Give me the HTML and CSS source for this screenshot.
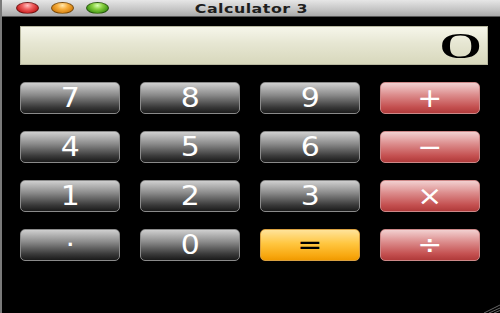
FILE: index.html
```html
<!DOCTYPE html>
<html>
<head>
<meta charset="utf-8">
<link rel="stylesheet" href="styles.css">
</head>
<body>
<div class="window">
  <div class="titlebar">
    <div class="lights">
      <span class="light red"></span>
      <span class="light orange"></span>
      <span class="light green"></span>
    </div>
    <div class="title">Calculator 3</div>
  </div>
  <div class="content">
    <div class="display"><span class="value">0</span></div>
    <div class="keys">
      <div class="key"><span>7</span></div>
      <div class="key"><span>8</span></div>
      <div class="key"><span>9</span></div>
      <div class="key op"><span>+</span></div>
      <div class="key"><span>4</span></div>
      <div class="key"><span>5</span></div>
      <div class="key"><span>6</span></div>
      <div class="key op"><span>−</span></div>
      <div class="key"><span>1</span></div>
      <div class="key"><span>2</span></div>
      <div class="key"><span>3</span></div>
      <div class="key op"><span>×</span></div>
      <div class="key"><span>·</span></div>
      <div class="key"><span>0</span></div>
      <div class="key eq"><span>=</span></div>
      <div class="key op"><span>÷</span></div>
    </div>
  </div>
  <svg class="grip" width="20" height="10" viewBox="0 0 20 10">
    <line x1="4" y1="10" x2="20" y2="2" stroke="#666" stroke-width="1"/>
    <line x1="9" y1="10" x2="20" y2="5" stroke="#666" stroke-width="1"/>
    <line x1="14" y1="10" x2="20" y2="7.5" stroke="#666" stroke-width="1"/>
  </svg>
</div>
</body>
</html>
```

FILE: styles.css
```css
html, body {
  margin: 0;
  padding: 0;
  background: #000;
}
.window {
  position: relative;
  width: 500px;
  height: 313px;
  background: #000;
  overflow: hidden;
  border-left: 2px solid #7a7a7a;
  box-sizing: border-box;
}
.titlebar {
  position: relative;
  height: 17px;
  background: linear-gradient(#e6e6e6, #c4c4c4 60%, #a9a9a9);
  border-bottom: 1px solid #555;
  box-sizing: border-box;
  display: flex;
  align-items: center;
  justify-content: center;
}
.lights {
  position: absolute;
  left: 14px;
  top: 2px;
  display: flex;
  gap: 12px;
}
.light {
  display: block;
  width: 23px;
  height: 12px;
  border-radius: 50%;
  box-sizing: border-box;
  border: 1px solid rgba(0,0,0,0.45);
}
.light.red {
  background: radial-gradient(ellipse at 50% 25%, #ffc0c0 0%, #f06060 35%, #c41818 80%);
}
.light.orange {
  background: radial-gradient(ellipse at 50% 25%, #ffe8b0 0%, #f8b040 35%, #d07a08 80%);
}
.light.green {
  background: radial-gradient(ellipse at 50% 25%, #d8ffb0 0%, #88d040 35%, #3a9010 80%);
}
.title {
  font-family: "DejaVu Sans", sans-serif;
  font-size: 13px;
  font-weight: bold;
  color: #1e1e1e;
  letter-spacing: 0.4px;
  transform: scaleX(1.22);
  line-height: 17px;
}
.content {
  padding: 9px 12px 0 18px;
}
.display {
  height: 39px;
  background: linear-gradient(#f6f6ea, #e6e6d2 45%, #d8d8bc);
  border: 1px solid #b8b8a0;
  box-sizing: border-box;
  display: flex;
  align-items: center;
  justify-content: flex-end;
  padding-right: 5px;
}
.value {
  font-family: "Liberation Serif", serif;
  font-size: 35px;
  line-height: 35px;
  color: #000;
  transform: scaleX(2.5);
  transform-origin: right center;
  margin-top: 2px;
}
.keys {
  margin-top: 17px;
  display: grid;
  grid-template-columns: repeat(4, 100px);
  grid-auto-rows: 32px;
  column-gap: 20px;
  row-gap: 17px;
}
.key {
  border-radius: 5px;
  border: 1px solid #8a8a8a;
  box-sizing: border-box;
  background: linear-gradient(#cfcfcf, #8a8a8a 40%, #3a3a3a 80%, #1a1a1a);
  display: flex;
  align-items: center;
  justify-content: center;
  color: #fff;
  font-family: "DejaVu Sans", sans-serif;
  font-size: 26px;
}
.key span {
  display: block;
  transform: scaleX(1.15);
  line-height: 30px;
}
.key.op {
  border-color: #c88;
  background: linear-gradient(#f2d0d0, #dc8c8c 40%, #c45050 80%, #b03a3a);
}
.key.eq {
  border-color: #d9a040;
  background: linear-gradient(#ffe39a, #ffc640 45%, #f8a810 85%, #f09a00);
  color: #000;
}
.grip {
  position: absolute;
  right: 0;
  bottom: 0;
}
```
